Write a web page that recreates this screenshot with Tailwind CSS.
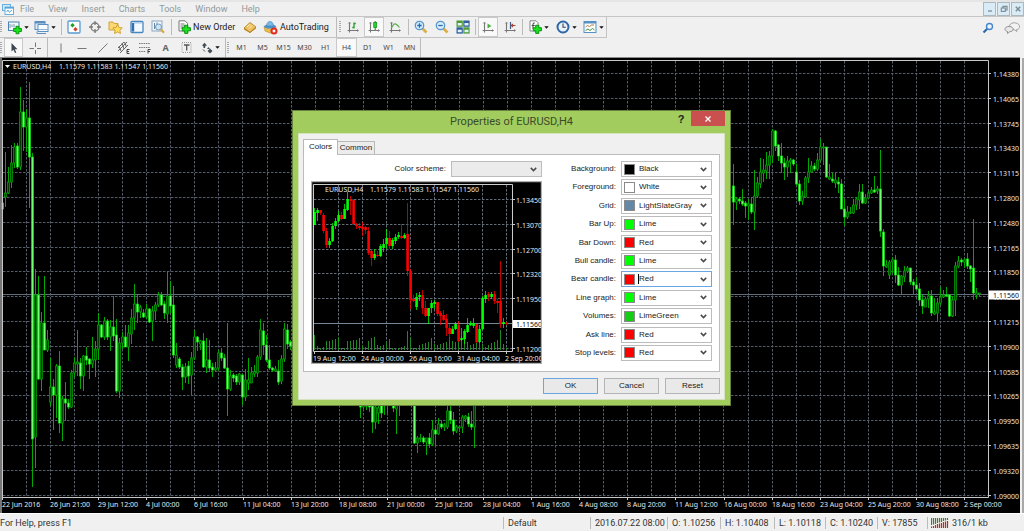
<!DOCTYPE html>
<html lang="en">
<head>
<meta charset="utf-8">
<title>EURUSD,H4</title>
<script src="https://cdn.jsdelivr.net/npm/@tailwindcss/browser@4"></script>
</head>
<body class="bg-[#f0f0f0] font-[Roboto,sans-serif] text-[9px] leading-3 text-[#222]">
<svg class="hidden" aria-hidden="true">
  <defs>
    <symbol id="plus" viewBox="0 0 8 8"><path d="M2.7.5h2.6v2.2h2.2v2.6H5.3v2.2H2.7V5.3H.5V2.7h2.2z" fill="#19e51f" stroke="#0b8a10" stroke-width=".8"/></symbol>
    <symbol id="down" viewBox="0 0 5 3"><path d="M.3.3h4.4L2.5 2.8z" fill="#111"/></symbol>
    <symbol id="chev" viewBox="0 0 7 5"><path d="M.8.9l2.7 2.7L6.2.9" fill="none" stroke="#4a4a4a" stroke-width="1.5"/></symbol>
    <symbol id="axes" viewBox="0 0 12 12"><path d="M2.5 1.500v10M.6 9.5h10.800" fill="none" stroke="#777" stroke-width="1.1"/><path d="M1.300 2.500L2.500 1l1.200 1.500M10 8.300l1.500 1.200L10 10.700" fill="none" stroke="#888" stroke-width=".8"/></symbol>
  </defs>
</svg>
<div class="flex min-h-screen flex-col">
  <div class="h-0.5 bg-[#e5e5e5]"></div>
  <nav class="flex h-[15px] items-center border-b border-[#c6c6c6] text-[#8f9a9a]" aria-label="Menu">
    <svg class="mx-0.5 size-3" viewBox="0 0 12 12"><rect x=".5" y="1.5" width="8" height="6" fill="#d5ecfa" stroke="#6aaede"/><rect x="3" y="4" width="8.5" height="7.5" fill="#fff" stroke="#6aaede"/><path d="M3 4.8h8.5" stroke="#58a4da" stroke-width="1.6"/><path d="M4.5 9l1.5-2 1.5 2.5L9.8 7" fill="none" stroke="#60a8d8"/></svg>
    <div class="ml-1 flex gap-[14px]">
      <button>File</button><button>View</button><button>Insert</button><button>Charts</button><button>Tools</button><button>Window</button><button>Help</button>
    </div>
    <div class="ml-auto flex gap-px">
      <button aria-label="Minimize" class="grid h-[14px] w-[13px] place-items-center border border-[#aeb9bd] bg-[#d9ebf6]"><svg class="size-2" viewBox="0 0 8 8"><path d="M2 6h4" stroke="#7c8c92" stroke-width="1.3"/></svg></button>
      <button aria-label="Restore" class="grid h-[14px] w-[13px] place-items-center border border-[#aeb9bd] bg-[#d9ebf6]"><svg class="size-2" viewBox="0 0 8 8"><path d="M3 3V1.4h4V5H5.5" fill="none" stroke="#7c8c92" stroke-width="1.2"/><rect x="1.3" y="3" width="4" height="3.4" fill="none" stroke="#7c8c92" stroke-width="1.1"/></svg></button>
      <button aria-label="Close" class="grid h-[14px] w-[13px] place-items-center border border-[#aeb9bd] bg-[#d9ebf6]"><svg class="size-2" viewBox="0 0 8 8"><path d="M1.8 1.8l4.4 4.4M6.2 1.8L1.8 6.2" stroke="#7c8c92" stroke-width="1.5"/></svg></button>
    </div>
  </nav>

  <div class="flex h-[21px] items-stretch">
    <div class="flex items-stretch border-r border-b border-[#c3c3c3]">
      <div class="my-1 w-1 bg-[repeating-linear-gradient(180deg,#aaa_0_1px,#f0f0f0_1px_2px)] bg-clip-content pr-0.5"></div>
      <button aria-label="New chart" class="flex w-[27px] items-center justify-center gap-0.5"><svg class="size-[15px]" viewBox="0 0 15 15"><rect x="1.5" y="2" width="10.5" height="8.5" fill="#f3f9fe" stroke="#4d84b5"/><path d="M3 8V4M5 7V4.500M7 7.500V4" stroke="#7d97ab"/><use href="#plus" x="6" y="5.500" width="9" height="9"/></svg><svg class="h-[3px] w-[5px]"><use href="#down"/></svg></button>
      <button aria-label="Profiles" class="flex w-7 items-center justify-center gap-0.5"><svg class="size-[15px]" viewBox="0 0 15 15"><rect x="1" y="1.500" width="10" height="8" fill="#dcecf8" stroke="#5c8fbd"/><path d="M1 2.500h10" stroke="#5c8fbd" stroke-width="2"/><rect x="4" y="4.500" width="10" height="7" fill="#fafdff" stroke="#5c8fbd"/><path d="M3 11.500v2h9" fill="none" stroke="#5c8fbd"/><path d="M4 9.500h10" stroke="#8db4d6"/></svg><svg class="h-[3px] w-[5px]"><use href="#down"/></svg></button>
      <div class="mx-[1px] my-0.5 w-0.5 border-r border-[#bbb]"></div>
      <button aria-label="Market Watch" class="grid w-[21px] place-items-center"><svg class="size-[14px]" viewBox="0 0 14 14"><rect x="1" y="1" width="12" height="12" rx="1" fill="#fff" stroke="#5a9bd0" stroke-width="1.300"/><path d="M5.500 3l2.200 2.200-2.200 2.200-2.200-2.200z" fill="#18a322"/><path d="M8.500 7l2.200 2.200-2.200 2.200-2.200-2.200z" fill="#d2432e"/></svg></button>
      <button aria-label="Data Window" class="grid w-[21px] place-items-center"><svg class="size-[14px]" viewBox="0 0 14 14" fill="none" stroke="#7a7a7a" stroke-width="1.300"><circle cx="7" cy="7" r="4"/><path d="M7 1v4M7 9v4M1 7h4M9 7h4"/></svg></button>
      <button aria-label="Navigator" class="grid w-[21px] place-items-center"><svg class="size-[15px]" viewBox="0 0 15 15"><path d="M1 2h4l1 1.500h4V10H1z" fill="#fbd873" stroke="#d3a336"/><path d="M9.500 4.500l1.500 3 3.300.4-2.400 2.300.6 3.300-3-1.600-3 1.600.6-3.300-2.300-2.300 3.200-.4z" fill="#ffdf5a" stroke="#c8922a" stroke-width=".8"/></svg></button>
      <button aria-label="Terminal" class="grid w-[21px] place-items-center"><svg class="size-[14px]" viewBox="0 0 14 14"><rect x="1" y="1.500" width="12" height="11" rx="1" fill="#f4f9fe" stroke="#4a86bf" stroke-width="1.300"/><path d="M3 3v8.500" stroke="#356fae" stroke-width="2.400"/><path d="M4 3h8" stroke="#9cc3e4"/></svg></button>
      <button aria-label="Strategy Tester" class="grid w-[21px] place-items-center"><svg class="size-[14px]" viewBox="0 0 14 14"><rect x="1" y="1" width="10" height="10" fill="#f2f6fa" stroke="#8ba5bd"/><path d="M3.500 3v6M6 2.500v6" stroke="#5f87a8"/><circle cx="7.500" cy="7" r="3" fill="#cde4f5" stroke="#7398b8"/><path d="M9.700 9.200l3.300 3.500" stroke="#d8a838" stroke-width="2"/></svg></button>
      <div class="mx-[1px] my-0.5 w-[3px] border-r border-[#bbb]"></div>
      <button class="flex w-[66px] items-center gap-0.5 pl-1 whitespace-nowrap"><svg class="size-[14px] shrink-0" viewBox="0 0 14 14"><path d="M2 .8h6l2.500 2.500V11H2z" fill="#fff" stroke="#777"/><path d="M3.500 4h4M3.500 6h5M3.500 8h3" stroke="#777"/><use href="#plus" x="4.500" y="4.500" width="9.500" height="9.500"/></svg>New Order</button>
      <button aria-label="MetaEditor" class="grid w-[22px] place-items-center"><svg class="size-[14px]" viewBox="0 0 14 14"><path d="M1 8l6-5.500 6 4.500-6 5.500z" fill="#edc264" stroke="#b17f1e" stroke-width=".8"/><path d="M1 8v1.500l6 3.500 6-4.500V7l-6 5z" fill="#b9811d"/><path d="M4 7l3-3M6 8.500l3-3" stroke="#fff0b8"/></svg></button>
      <button class="flex w-[72px] items-center gap-0.5 pl-0.5 whitespace-nowrap"><svg class="size-[15px] shrink-0" viewBox="0 0 15 15"><path d="M1 6.500L7 9l6-2.500-1 5L7 13l-5-2z" fill="#e9bd4d" stroke="#b98a20" stroke-width=".6"/><ellipse cx="7" cy="6.500" rx="6" ry="2" fill="#4d93cd"/><path d="M3.500 6c0-6 7-6 7 0z" fill="#7bb8e3" stroke="#3f82b8" stroke-width=".6"/><circle cx="11" cy="11" r="3.500" fill="#e02c1d"/><rect x="9.700" y="9.700" width="2.600" height="2.600" fill="#fff"/></svg>AutoTrading</button>
      <div class="ml-[3px] border-r border-[#bbb]"></div>
      <div class="my-1 ml-0.5 w-[3px] bg-[repeating-linear-gradient(180deg,#aaa_0_1px,#f0f0f0_1px_2px)] bg-clip-content pr-px"></div>
      <button aria-label="Bar chart" class="grid w-[22px] place-items-center"><svg class="size-3" viewBox="0 0 12 12"><use href="#axes"/><path d="M7 1.500v6M7 2.500h1.800M5.300 6.500H7" stroke="#23a02a" stroke-width="1.300"/></svg></button>
      <button aria-label="Candlesticks" class="grid w-5 place-items-center border border-[#c9c9c9] bg-[#f9f9f9]"><svg class="size-3" viewBox="0 0 12 12"><use href="#axes"/><path d="M7.200 0v9" stroke="#158a1c"/><rect x="5.700" y="1.500" width="3" height="5" fill="#1fd72a" stroke="#158a1c" stroke-width=".7"/></svg></button>
      <button aria-label="Line chart" class="grid w-[22px] place-items-center"><svg class="size-3" viewBox="0 0 12 12"><use href="#axes"/><path d="M2.500 7C5 1 7 2 10.500 6.500" fill="none" stroke="#5fae4e" stroke-width="1.200"/></svg></button>
      <div class="mx-[1px] my-0.5 w-0.5 border-r border-[#bbb]"></div>
      <button aria-label="Zoom in" class="grid w-[21px] place-items-center"><svg class="size-[14px]" viewBox="0 0 14 14"><path d="M8.500 8.500L12.500 12.500" stroke="#dcae48" stroke-width="2.600"/><circle cx="5.500" cy="5.500" r="4.200" fill="#d7ecfb" stroke="#5a97cd" stroke-width="1.300"/><path d="M3.300 5.500h4.400M5.500 3.300v4.400" stroke="#2a6cab" stroke-width="1.300"/></svg></button>
      <button aria-label="Zoom out" class="grid w-[21px] place-items-center"><svg class="size-[14px]" viewBox="0 0 14 14"><path d="M8.500 8.500L12.500 12.500" stroke="#dcae48" stroke-width="2.600"/><circle cx="5.500" cy="5.500" r="4.200" fill="#d7ecfb" stroke="#5a97cd" stroke-width="1.300"/><path d="M3.300 5.500h4.400" stroke="#2a6cab" stroke-width="1.300"/></svg></button>
      <button aria-label="Tile windows" class="grid w-[21px] place-items-center"><svg class="size-[14px]" viewBox="0 0 14 14"><rect x=".5" y=".5" width="6.300" height="6.300" fill="#4a9a35"/><rect x="7.300" y=".5" width="6.300" height="6.300" fill="#2d5f9e"/><rect x=".5" y="7.300" width="6.300" height="6.300" fill="#2d5f9e"/><rect x="7.300" y="7.300" width="6.300" height="6.300" fill="#4a9a35"/><path d="M1.700 4.200h4M8.500 4.200h4M1.700 11h4M8.500 11h4" stroke="#e6f2fa" stroke-width="2.400"/></svg></button>
      <div class="mx-[1px] my-0.5 w-0.5 border-r border-[#bbb]"></div>
      <button aria-label="Auto scroll" class="mx-px grid w-5 place-items-center border border-[#c9c9c9] bg-[#f9f9f9]"><svg class="size-3" viewBox="0 0 12 12"><use href="#axes"/><path d="M5.500 2.500v5l4-2.500z" fill="#4cb043"/></svg></button>
      <button aria-label="Chart shift" class="grid w-[22px] place-items-center"><svg class="size-3" viewBox="0 0 12 12"><use href="#axes"/><path d="M6.500 1v7" stroke="#3a5c86" stroke-width="1.200"/><path d="M11.500 4.500h-4M9 3L7.300 4.500 9 6" fill="none" stroke="#b0453a" stroke-width="1.100"/></svg></button>
      <div class="mx-px my-0.5 border-r border-[#bbb]"></div>
      <button aria-label="Indicators" class="flex w-7 items-center justify-center gap-0.5"><svg class="size-[14px]" viewBox="0 0 14 14"><path d="M2 .8h6l2 2V11H2z" fill="#fff" stroke="#888"/><path d="M5 9V4q0-1.500 1.800-1M3.700 5.500h3" stroke="#444" fill="none"/><use href="#plus" x="4.500" y="4.500" width="9.500" height="9.500"/></svg><svg class="h-[3px] w-[5px]"><use href="#down"/></svg></button>
      <button aria-label="Periods" class="flex w-7 items-center justify-center gap-0.5"><svg class="size-[14px]" viewBox="0 0 14 14"><circle cx="7" cy="7" r="5.500" fill="#e7f2fb" stroke="#2f66a8" stroke-width="2"/><path d="M7 3.500V7.200h2.800" fill="none" stroke="#444" stroke-width="1.100"/></svg><svg class="h-[3px] w-[5px]"><use href="#down"/></svg></button>
      <button aria-label="Templates" class="flex w-[26px] items-center justify-center gap-0.5"><svg class="size-[14px]" viewBox="0 0 14 14"><rect x="1" y="1.500" width="12" height="11" fill="#fafcfe" stroke="#5790c4"/><path d="M1 2.500h12" stroke="#5790c4" stroke-width="2"/><path d="M2.500 7l2-1.500 2 1 2-1.500 2.500 0" fill="none" stroke="#b5813a"/><path d="M2.500 10.500l2.500-1.500 2 1.500 2.500-2 2 1.500" fill="none" stroke="#3c9b3c"/></svg><svg class="h-[3px] w-[5px]"><use href="#down"/></svg></button>
    </div>
    <div class="ml-auto flex items-center gap-2.5 pr-1">
      <button aria-label="Search"><svg class="size-3" viewBox="0 0 12 12"><path d="M5.500 6.500L1.500 10.500" stroke="#2c66ad" stroke-width="2.200"/><circle cx="7.500" cy="4.500" r="3" fill="#eef6fd" stroke="#4487cc" stroke-width="1.400"/></svg></button>
      <button aria-label="Messages"><svg class="h-3 w-4" viewBox="0 0 16 12"><path d="M10 .8c7 0 7 6.700 2.500 6.800L13 9.500 10.500 7.800C4 8 4 .8 10 .8z" fill="#f2f2f2" stroke="#9a9a9a" stroke-width=".9"/><path d="M5 4.500c5.500 0 5.500 5 .5 5.300L3.500 11.500V9.500C-.5 8.500.500 4.500 5 4.500z" fill="#e9e9e9" stroke="#888" stroke-width=".9"/></svg></button>
    </div>
  </div>

  <div class="flex h-[19px] items-stretch text-[7px] text-[#444]">
    <div class="flex items-stretch border-r border-[#bbb] font-['Noto_Sans',sans-serif]">
      <div class="my-1 w-1 bg-[repeating-linear-gradient(180deg,#aaa_0_1px,#f0f0f0_1px_2px)] bg-clip-content pr-0.5"></div>
      <button aria-label="Cursor" class="grid w-[19px] place-items-center border border-[#c9c9c9] bg-[#f9f9f9]"><svg class="size-3" viewBox="0 0 12 12"><path d="M3.500 1v8.500l2-1.700 1.500 3.200 1.300-.6-1.500-3.200h2.700z" fill="#3d4650"/></svg></button>
      <button aria-label="Crosshair" class="grid w-[23px] place-items-center"><svg class="size-3" viewBox="0 0 12 12"><path d="M6.500 .5v4.500M6.500 8v4M.5 6.500h4.500M8 6.500h4" stroke="#777"/></svg></button>
      <div class="mx-[1px] w-0.5 border-l border-[#bbb]"></div>
      <button aria-label="Vertical line" class="grid w-[21px] place-items-center"><svg class="size-3" viewBox="0 0 12 12"><path d="M6 1.500v9" stroke="#777"/></svg></button>
      <button aria-label="Horizontal line" class="grid w-[21px] place-items-center"><svg class="size-3" viewBox="0 0 12 12"><path d="M1.500 6.500h9" stroke="#777"/></svg></button>
      <button aria-label="Trendline" class="grid w-[21px] place-items-center"><svg class="size-3" viewBox="0 0 12 12"><path d="M1.500 10.500l9-9" stroke="#777"/></svg></button>
      <button aria-label="Channel" class="grid w-[21px] place-items-center"><svg class="size-[13px]" viewBox="0 0 13 13"><path d="M1 7l6-6M1 10l9-9M3 12l8-8M2 5l2 5M5 2l2 6M7.500 1l2 5" stroke="#666" stroke-width="1"/><path d="M12.500 8.500h-2.500v4h2.500M10 10.500h2" fill="none" stroke="#333" stroke-width=".9"/></svg></button>
      <button aria-label="Fibonacci" class="grid w-[21px] place-items-center"><svg class="size-[13px]" viewBox="0 0 13 13"><path d="M1 2.500h11M1 6.500h11M1 10.500h7" stroke="#777" stroke-dasharray="1.500 .8"/><path d="M12.500 8.500h-2.500v4M10 10.500h2" fill="none" stroke="#333" stroke-width=".9"/></svg></button>
      <button class="w-[21px] text-[9px] font-bold text-[#666]">A</button>
      <button aria-label="Text label" class="grid w-[21px] place-items-center"><svg class="size-[13px]" viewBox="0 0 13 13"><rect x="2" y="1.500" width="9" height="10" fill="none" stroke="#999" stroke-dasharray="1 1"/><path d="M4 4h5.500M6.700 4v5.500" stroke="#555" stroke-width="1.300"/></svg></button>
      <button aria-label="Arrows" class="flex w-[27px] items-center justify-center gap-0.5"><svg class="size-3" viewBox="0 0 12 12"><path d="M3.500.8L6 3.500 4.500 3.800 4 6 2.500 6 2.300 4 1 3.500zM6 7l1.500-2 1.500 2zM9 6.500l2.500 2.500L9 11.500 6.500 9z" fill="#454d56"/><path d="M2 7.500l2 2" stroke="#454d56"/></svg><svg class="h-[3px] w-[5px]"><use href="#down"/></svg></button>
      <div class="mx-px border-r border-[#bbb]"></div>
      <div class="my-1 mr-px w-[3px] bg-[repeating-linear-gradient(180deg,#aaa_0_1px,#f0f0f0_1px_2px)] bg-clip-content pr-px"></div>
      <button class="w-[21px]">M1</button><button class="w-[21px]">M5</button><button class="w-[21px]">M15</button><button class="w-[21px]">M30</button><button class="w-[21px]">H1</button><button class="w-[21px] border border-[#c9c9c9] bg-[#f9f9f9]">H4</button><button class="w-[21px]">D1</button><button class="w-[21px]">W1</button><button class="w-[21px]">MN</button>
    </div>
  </div>

  <main class="relative flex-1 bg-black">
    <svg id="chart" class="block w-full font-['Noto_Sans',sans-serif] text-[7px]" viewBox="0 57 1024 456" fill="#e8e8e8" role="img" aria-label="EURUSD H4 candlestick chart">
      <rect y="57" width="1024" height="1" fill="#8a8a8a"/>
      <rect y="58" width="2" height="455" fill="#777"/>
      <rect x="1020" y="57" width="4" height="456" fill="#f0f0f0"/><rect x="1022" y="58" width="2" height="455" fill="#a9a9a9"/>
      <g id="grid" fill="none" stroke="#535e69" stroke-dasharray="2.500 1.500"></g>
      <path d="M2 294.500h987" stroke="#5f6e7c"/>
      <g id="candles"></g>
      <path d="M2.500 497V60.500h986V497.500H2" fill="none" stroke="#c8c8c8"/>
      <g id="labels"></g>
      <rect x="989" y="290.500" width="31" height="9" fill="#fff"/>
      <text x="993" y="297.500" fill="#111">1.11560</text>
      <path d="M5 65h5l-2.500 3z" fill="#fff"/>
      <text x="13" y="69">EURUSD,H4</text><text x="59" y="69">1.11579 1.11583 1.11547 1.11560</text>
    </svg>

    <section role="dialog" aria-labelledby="title" class="absolute top-[53px] left-[292px] flex w-[439px] flex-col border border-[#66833b] bg-[#a2cd5e] px-[5px] pb-[5px] font-['Liberation_Sans',sans-serif] text-[8px]">
      <header class="flex h-[22px] items-start">
        <span class="w-[54px]"></span>
        <h1 id="title" class="flex-1 pt-[3px] text-center font-[Roboto,sans-serif] text-[11px] leading-4 text-[#3d4a2a]">Properties of EURUSD,H4</h1>
        <button aria-label="Help" class="w-5 text-[11px] leading-4 font-bold text-[#222]">?</button>
        <button aria-label="Close" class="grid h-[15px] w-[34px] place-items-center bg-[#c9504e]"><svg class="size-2" viewBox="0 0 8 8"><path d="M1.500 1.500l5 5M6.500 1.500l-5 5" stroke="#fff" stroke-width="1.300"/></svg></button>
      </header>
      <div class="border border-[#d4e3bb] bg-[#f0f0f0] px-1 pt-[5px] pb-[5px]">
        <div role="tablist" class="flex items-end">
          <button role="tab" aria-selected="true" class="relative z-10 -mb-px h-4 w-[35px] border border-b-0 border-[#b9b9b9] bg-white pb-0.5">Colors</button>
          <button role="tab" aria-selected="false" class="h-[13px] w-[37px] border border-b-0 border-l-0 border-[#b9b9b9] bg-[#ececec] whitespace-nowrap">Common</button>
        </div>
        <div class="flex justify-between border border-[#bdbdbd] bg-white p-[7px] pt-[6px]">
          <div class="flex w-[231px] flex-col justify-between">
            <div class="flex items-center justify-end gap-[5px]">
              <label for="scheme">Color scheme:</label>
              <div class="relative flex h-4 w-[91px] items-center border border-[#bcbcbc] bg-[#ebebeb]">
                <select id="scheme" class="h-full w-full appearance-none"><option></option></select>
                <svg class="pointer-events-none absolute right-1 h-[5px] w-[7px]"><use href="#chev"/></svg>
              </div>
            </div>
            <svg id="preview" class="mt-1 block w-full bg-black font-['Noto_Sans',sans-serif] text-[7px]" viewBox="312 180 231 183" fill="#e8e8e8" role="img" aria-label="Color preview">
              <g id="pgrid" fill="none" stroke="#626d78" stroke-dasharray="2.500 1.500"></g>
              <path d="M315 322.500h199" stroke="#778899"/>
              <g id="pvol" stroke="#1f8a1f"></g>
              <g id="pcandles"></g>
              <path d="M314.500 183.500h199v167h-199z" fill="none" stroke="#ccc"/>
              <g id="plabels"></g>
              <rect x="514" y="319" width="28" height="8" fill="#fff"/><text x="517" y="326" fill="#111">1.11560</text>
              <text x="326" y="191">EURUSD,H4</text><text x="371" y="191">1.11579 1.11583 1.11547 1.11560</text>
              <path d="M312.500 363V180.500h230V362.500h-230" fill="none" stroke="#adadad" stroke-width="1.500"/>
            </svg>
          </div>
          <div class="flex h-[200px] flex-col justify-between">
            <div class="flex items-center justify-end gap-[5px]"><label for="c1">Background:</label><div class="relative flex h-4 w-[91px] items-center border border-[#bcbcbc] bg-white pl-0.5"><span class="size-[11px] border border-[#8a8a8a] bg-black"></span><select id="c1" class="h-full flex-1 appearance-none pl-1"><option>Black</option></select><svg class="pointer-events-none absolute right-1 h-[5px] w-[7px]"><use href="#chev"/></svg></div></div>
            <div class="flex items-center justify-end gap-[5px]"><label for="c2">Foreground:</label><div class="relative flex h-4 w-[91px] items-center border border-[#bcbcbc] bg-white pl-0.5"><span class="size-[11px] border border-[#8a8a8a] bg-white"></span><select id="c2" class="h-full flex-1 appearance-none pl-1"><option>White</option></select><svg class="pointer-events-none absolute right-1 h-[5px] w-[7px]"><use href="#chev"/></svg></div></div>
            <div class="flex items-center justify-end gap-[5px]"><label for="c3">Grid:</label><div class="relative flex h-4 w-[91px] items-center border border-[#bcbcbc] bg-white pl-0.5"><span class="size-[11px] border border-[#8a8a8a] bg-[#6488a8]"></span><select id="c3" class="h-full flex-1 appearance-none pl-1"><option>LightSlateGray</option></select><svg class="pointer-events-none absolute right-1 h-[5px] w-[7px]"><use href="#chev"/></svg></div></div>
            <div class="flex items-center justify-end gap-[5px]"><label for="c4">Bar Up:</label><div class="relative flex h-4 w-[91px] items-center border border-[#bcbcbc] bg-white pl-0.5"><span class="size-[11px] border border-[#8a8a8a] bg-[#0f0]"></span><select id="c4" class="h-full flex-1 appearance-none pl-1"><option>Lime</option></select><svg class="pointer-events-none absolute right-1 h-[5px] w-[7px]"><use href="#chev"/></svg></div></div>
            <div class="flex items-center justify-end gap-[5px]"><label for="c5">Bar Down:</label><div class="relative flex h-4 w-[91px] items-center border border-[#bcbcbc] bg-white pl-0.5"><span class="size-[11px] border border-[#8a8a8a] bg-[#f00]"></span><select id="c5" class="h-full flex-1 appearance-none pl-1"><option>Red</option></select><svg class="pointer-events-none absolute right-1 h-[5px] w-[7px]"><use href="#chev"/></svg></div></div>
            <div class="flex items-center justify-end gap-[5px]"><label for="c6">Bull candle:</label><div class="relative flex h-4 w-[91px] items-center border border-[#bcbcbc] bg-white pl-0.5"><span class="size-[11px] border border-[#8a8a8a] bg-[#0f0]"></span><select id="c6" class="h-full flex-1 appearance-none pl-1"><option>Lime</option></select><svg class="pointer-events-none absolute right-1 h-[5px] w-[7px]"><use href="#chev"/></svg></div></div>
            <div class="flex items-center justify-end gap-[5px]"><label for="c7">Bear candle:</label><div class="relative flex h-4 w-[91px] items-center border border-[#6aa6e4] bg-white pl-0.5"><span class="size-[11px] border border-[#8a8a8a] bg-[#f00]"></span><span class="ml-[3px] h-[10px] border-l border-black"></span><select id="c7" class="h-full flex-1 appearance-none"><option>Red</option></select><svg class="pointer-events-none absolute right-1 h-[5px] w-[7px]"><use href="#chev"/></svg></div></div>
            <div class="flex items-center justify-end gap-[5px]"><label for="c8">Line graph:</label><div class="relative flex h-4 w-[91px] items-center border border-[#bcbcbc] bg-white pl-0.5"><span class="size-[11px] border border-[#8a8a8a] bg-[#0f0]"></span><select id="c8" class="h-full flex-1 appearance-none pl-1"><option>Lime</option></select><svg class="pointer-events-none absolute right-1 h-[5px] w-[7px]"><use href="#chev"/></svg></div></div>
            <div class="flex items-center justify-end gap-[5px]"><label for="c9">Volumes:</label><div class="relative flex h-4 w-[91px] items-center border border-[#bcbcbc] bg-white pl-0.5"><span class="size-[11px] border border-[#8a8a8a] bg-[#14cd14]"></span><select id="c9" class="h-full flex-1 appearance-none pl-1"><option>LimeGreen</option></select><svg class="pointer-events-none absolute right-1 h-[5px] w-[7px]"><use href="#chev"/></svg></div></div>
            <div class="flex items-center justify-end gap-[5px]"><label for="c10">Ask line:</label><div class="relative flex h-4 w-[91px] items-center border border-[#bcbcbc] bg-white pl-0.5"><span class="size-[11px] border border-[#8a8a8a] bg-[#f00]"></span><select id="c10" class="h-full flex-1 appearance-none pl-1"><option>Red</option></select><svg class="pointer-events-none absolute right-1 h-[5px] w-[7px]"><use href="#chev"/></svg></div></div>
            <div class="flex items-center justify-end gap-[5px]"><label for="c11">Stop levels:</label><div class="relative flex h-4 w-[91px] items-center border border-[#bcbcbc] bg-white pl-0.5"><span class="size-[11px] border border-[#8a8a8a] bg-[#f00]"></span><select id="c11" class="h-full flex-1 appearance-none pl-1"><option>Red</option></select><svg class="pointer-events-none absolute right-1 h-[5px] w-[7px]"><use href="#chev"/></svg></div></div>
          </div>
        </div>
        <div class="mt-1.5 flex justify-end gap-1.5">
          <button class="h-4 w-[55px] border border-[#6aa6e4] bg-[#e9e9e9]">OK</button>
          <button class="h-4 w-[55px] border border-[#b4b4b4] bg-[#e9e9e9]">Cancel</button>
          <button class="h-4 w-[55px] border border-[#b4b4b4] bg-[#e9e9e9]">Reset</button>
        </div>
      </div>
    </section>
  </main>

  <footer class="flex h-[18px] items-center border-t border-white text-[#333]">
    <span class="flex-1">For Help, press F1</span>
    <span class="w-[87px] border-l border-[#bbb] pl-1">Default</span>
    <span class="w-[77px] border-l border-[#bbb] pl-1">2016.07.22 08:00</span>
    <span class="w-[53px] border-l border-[#bbb] pl-1">O: 1.10256</span>
    <span class="w-[54px] border-l border-[#bbb] pl-1">H: 1.10408</span>
    <span class="w-[51px] border-l border-[#bbb] pl-1">L: 1.10118</span>
    <span class="w-[52px] border-l border-[#bbb] pl-1">C: 1.10240</span>
    <span class="w-[50px] border-l border-[#bbb] pl-1">V: 17855</span>
    <span class="flex w-[97px] items-center gap-[3px] border-l border-[#bbb] pl-[3px]"><svg class="h-[10px] w-[18px]" viewBox="0 0 18 10"><path d="M.5 0v7M2.500 0v6.500M4.500 0v6M6.500 0v5M8.500 0v4.500M10.500 0v4M12.500 0v3M14.500 0v2.500M16.500 0v2" stroke="#4f7a2c" stroke-width="1.200"/><path d="M.5 8.500v1.500M2.500 8v2M4.500 7v3M6.500 6v4M8.500 5.500v4.500M10.500 5v5M12.500 4v6M14.500 3.500v6.500M16.500 3v7" stroke="#c02a1a" stroke-width="1.200"/></svg>316/1 kb</span>
  </footer>
</div>
<script>
// Each candle: x, high, low, body top, body bottom, falling flag (chart units)
const bars = `2,182,209,203,209,1 5,152,207,193,197,0 8,167,194,182,193,0 11,145,188,163,182,0 14,143,168,147,163,0 17,143,169,146,167,1 20,87,170,112,167,0 23,100,151,112,127,1 26,109,152,118,127,0 29,82,208,118,157,1 32,153,487,157,439,1 35,269,468,295,437,0 38,276,380,295,379,1 41,312,391,323,379,0 44,276,350,323,350,1 47,330,352,340,350,0 50,358,406,387,402,0 53,379,430,387,395,1 56,364,418,366,395,0 59,351,433,366,423,1 62,396,441,399,423,0 65,382,421,399,403,1 68,399,409,403,407,1 71,370,408,373,407,0 74,357,377,363,373,0 77,330,376,362,364,0 80,358,389,363,376,1 83,355,391,356,376,0 86,347,365,356,360,1 89,358,379,359,364,1 92,337,368,360,364,0 95,341,377,349,360,0 98,313,360,325,349,0 101,324,338,325,337,1 104,317,340,321,337,0 107,319,340,321,337,1 110,320,351,327,337,0 113,296,341,327,336,1 116,319,393,335,391,1 119,338,398,343,391,0 122,332,349,337,343,0 125,325,347,337,347,1 128,325,361,333,347,0 131,309,344,318,334,0 134,284,330,304,318,0 137,294,323,304,312,1 140,305,318,307,312,0 143,309,318,313,317,1 146,304,319,309,317,0 149,308,323,309,322,1 152,306,341,311,321,0 155,302,320,305,311,0 158,292,307,295,305,0 161,292,306,295,305,1 164,301,319,304,313,1 167,271,323,296,314,0 170,281,313,296,306,1 173,286,358,305,355,1 176,343,368,355,365,0 179,357,369,359,367,1 182,364,390,367,377,1 185,363,383,367,377,0 188,361,384,366,376,1 191,352,395,358,375,0 194,330,360,337,358,0 197,336,351,337,342,1 200,340,350,341,344,0 203,333,368,341,367,1 206,338,373,360,367,0 209,340,372,360,368,1 212,363,377,367,370,1 215,362,372,368,370,0 218,350,371,353,368,0 221,348,361,353,358,1 224,354,369,358,368,1 227,323,416,368,389,1 230,370,391,376,389,0 233,373,382,375,378,1 236,374,385,376,382,1 239,373,385,374,382,0 242,374,405,375,397,1 245,369,401,380,397,0 248,358,390,380,383,0 251,367,383,373,383,0 254,365,377,372,374,0 257,355,377,357,373,0 260,319,360,330,357,0 263,323,355,331,345,1 266,335,362,345,360,1 269,345,370,360,368,1 272,367,372,368,370,1 275,366,372,369,371,0 278,360,385,371,382,1 281,355,384,359,381,0 284,323,362,329,359,0 287,324,349,330,344,1 290,340,350,342,346,1
360,395,418,404,407,1 363,395,409,404,407,0 366,397,410,404,406,1 369,398,412,404,407,1 372,400,433,406,422,1 375,400,429,407,422,0 378,400,424,408,413,0 381,398,418,403,413,1 384,398,415,402,404,0 387,398,413,401,403,0 393,398,412,402,408,1 396,398,434,404,409,0 399,398,416,400,405,0 414,400,444,400,443,1 417,436,453,438,443,0 420,434,442,438,439,0 423,436,444,438,442,1 426,438,455,438,442,0 429,433,448,438,444,1 432,420,446,430,444,0 435,427,445,430,434,1 438,418,435,424,434,0 441,420,429,424,427,1 444,423,431,425,427,0 447,400,429,411,427,0 450,400,424,411,420,1 453,412,435,420,431,1 456,425,433,427,431,0 459,425,432,427,428,0 462,415,433,417,427,0 465,415,422,416,419,0 468,413,427,417,424,1 471,411,430,424,427,1 474,400,448,395,427,0
733,164,225,186,202,1 736,197,210,199,202,0 739,197,204,199,201,1 742,189,206,201,204,1 745,201,218,203,206,1 748,199,220,204,206,0 751,198,214,204,212,1 754,170,230,196,212,0 757,177,198,183,196,0 760,158,188,172,184,0 763,159,182,170,173,0 766,152,179,165,171,0 769,151,179,156,165,0 772,129,163,131,156,0 775,130,151,131,146,1 778,144,161,145,156,1 781,143,173,156,163,1 784,158,180,163,167,1 787,156,177,161,167,0 790,158,173,160,162,0 793,159,166,160,164,1 796,164,186,172,184,1 799,180,205,184,201,1 802,191,205,196,201,0 805,176,198,178,197,0 808,158,183,172,178,0 811,161,173,166,172,0 814,163,171,166,169,1 817,153,171,160,169,0 820,139,161,147,160,0 823,143,165,147,148,0 826,147,178,147,177,1 829,164,180,177,179,0 832,173,183,179,181,1 835,173,188,180,183,0 838,177,193,182,184,1 841,179,209,184,209,1 844,199,226,209,217,1 847,206,219,212,217,0 850,207,214,212,213,0 853,199,214,205,213,0 856,197,210,199,205,0 859,184,209,192,200,0 862,184,204,192,203,1 865,194,204,198,203,0 868,191,199,193,198,0 871,187,194,190,193,0 874,176,193,190,192,1 877,186,194,189,191,0 880,150,237,189,231,1 883,229,276,232,266,1 886,260,268,265,267,0 889,260,279,262,275,0 892,257,273,260,262,0 895,255,283,260,275,1 898,267,286,275,285,1 901,275,294,276,285,0 904,266,282,271,277,0 907,266,273,268,271,0 910,268,285,268,282,1 913,279,295,282,285,1 916,277,290,285,289,1 919,283,306,289,300,1 922,295,314,300,306,1 925,297,307,299,307,0 928,291,308,296,299,0 931,290,316,296,313,1 934,298,315,312,314,0 937,298,322,303,313,0 940,287,305,297,303,0 943,290,298,295,297,0 946,287,297,295,296,1 949,295,317,295,316,1 952,296,317,300,316,0 955,262,316,266,300,0 958,256,268,261,266,0 961,258,266,260,262,1 964,258,268,260,262,0 967,253,269,259,266,1 970,265,282,266,269,1 973,219,300,268,293,1 976,288,299,293,295,0 979,293,296,293,294,0`;
const previewBars = `315,207,224,211,224,0 318,207,220,209,212,0 321,209,214,209,212,1 324,212,232,214,230,1 327,227,247,230,244,1 330,237,247,240,244,0 333,222,241,225,240,0 336,217,228,220,225,0 339,210,221,214,220,0 342,211,219,214,218,1 345,203,218,208,218,0 348,191,210,198,209,0 351,195,214,198,200,1 354,198,224,199,223,1 357,222,228,223,225,1 360,222,229,225,227,1 363,221,235,226,228,1 366,225,233,226,229,1 369,226,254,230,252,1 372,248,265,250,257,1 375,248,259,253,257,0 378,250,256,254,255,1 381,243,256,245,255,0 384,238,251,243,247,0 387,228,248,237,243,0 390,230,248,237,245,1 393,237,248,239,245,0 396,233,243,236,240,0 399,231,238,234,236,0 402,223,238,235,237,1 405,232,238,234,237,0 408,202,275,233,270,1 411,268,308,270,299,1 414,294,301,298,300,1 417,292,309,296,306,0 420,291,300,294,296,0 423,289,313,294,307,1 426,300,316,307,315,1 429,307,323,307,315,0 432,299,312,302,307,0 435,299,308,301,303,0 438,301,315,301,313,1 441,310,324,312,315,1 444,309,320,314,319,1 447,313,335,318,327,1 450,323,339,327,333,1 453,325,333,328,333,0 456,321,329,323,328,0 459,320,341,324,340,1 462,327,340,337,339,0 465,328,343,330,338,0 468,317,332,324,331,0 471,320,325,322,324,0 474,317,327,322,325,0 477,323,342,323,341,1 480,324,342,328,341,0 483,295,329,297,328,0 486,290,302,294,298,0 489,291,300,293,296,1 492,291,298,293,296,0 495,290,303,293,300,1 498,298,312,300,302,1 501,260,327,300,323,1 504,317,327,321,323,0 507,321,324,322,323,1`;
const volumes = [15,4,2,3,9,9,10,11,13,2,2,9,9,10,10,12,5,3,9,12,13,5,4,5,8,11,2,2,2,3,4,19,13,2,2,5,6,7,8,12,6,5,6,7,8,13,9,8,9,14,13,8,5,6,7,12,6,3,5,7,8,10,20,6,2];
const prices = ['1.14380','1.14065','1.13745','1.13430','1.13115','1.12800','1.12480','1.12165','1.11850','1.11535','1.11215','1.10900','1.10585','1.10265','1.09950','1.09635','1.09320','1.09000'];
const times = ['22 Jun 2016','26 Jun 21:00','29 Jun 12:00','4 Jul 00:00','6 Jul 16:00','11 Jul 04:00','13 Jul 20:00','18 Jul 08:00','21 Jul 00:00','25 Jul 12:00','28 Jul 04:00','1 Aug 16:00','4 Aug 08:00','8 Aug 20:00','11 Aug 12:00','16 Aug 00:00','18 Aug 16:00','23 Aug 04:00','25 Aug 20:00','30 Aug 08:00','2 Sep 00:00'];
const put = (id, s) => { document.getElementById(id).innerHTML = s; };
const parse = s => s.trim().split(/\s+/).map(b => b.split(',').map(Number));

put('candles', parse(bars).map(([x, h, l, t, b, d]) =>
  `<path d="M${x + .5} ${h}V${l}" stroke="#00a800"/><rect x="${x - .5}" y="${t}" width="2" height="${Math.max(b - t, 1)}" fill="${d ? '#70ff70' : '#003a00'}" stroke="${d ? '#0be00b' : '#00ac00'}" stroke-width=".7"/>`).join(''));
put('pcandles', parse(previewBars).map(([x, h, l, t, b, d]) => {
  const c = d ? '#f00' : '#0f0';
  return `<path d="M${x + .5} ${h}V${l}" stroke="${c}" stroke-opacity=".75"/><rect x="${x - .7}" y="${t}" width="2.6" height="${Math.max(b - t, 1)}" fill="${c}"/>`;
}).join(''));
put('pvol', volumes.map((v, i) => `<path d="M${315.5 + i * 3} 349v${-v}"/>`).join(''));

let g = '', t = '';
for (let i = 0; i < 40; i++) g += `<path d="M${Math.round(26 + i * 24.05) + .5} 61V497"/>`;
prices.forEach((p, i) => {
  const y = Math.round(74 + i * 24.8) - .5;
  g += `<path d="M3 ${y}H988"/>`;
  t += `<path d="M989 ${y}h2" stroke="#ccc"/><text x="993" y="${y + 3}">${p}</text>`;
});
times.forEach((s, i) => {
  const x = Math.round(2 + i * 48.1);
  t += `<path d="M${x + .5} 498v2" stroke="#ccc"/><text x="${x}" y="506.5">${s}</text>`;
});
put('grid', g);
put('labels', t);

g = ''; t = '';
for (let x = 339.5; x < 513; x += 24) g += `<path d="M${x} 184V350"/>`;
['1.13450','1.13070','1.12700','1.12320','1.11950','','1.11200'].forEach((p, i) => {
  const y = Math.round(198 + i * 24.8) + .5;
  g += `<path d="M315 ${y}H513"/>`;
  if (p) t += `<path d="M514 ${y}h2" stroke="#ccc"/><text x="517" y="${y + 3}">${p}</text>`;
});
['19 Aug 12:00','24 Aug 00:00','26 Aug 16:00','31 Aug 04:00','2 Sep 20:00'].forEach((s, i) => {
  t += `<path d="M${315.5 + i * 48} 351v2" stroke="#ccc"/><text x="${314 + i * 48}" y="359.5">${s}</text>`;
});
put('pgrid', g);
put('plabels', t);
</script>
</body>
</html>
